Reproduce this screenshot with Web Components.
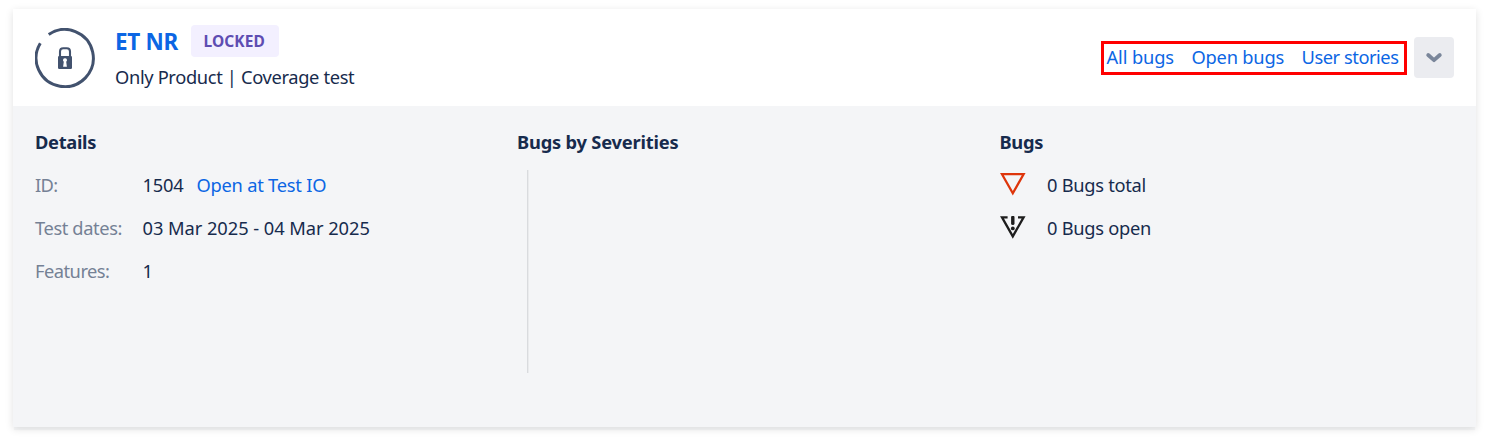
<!DOCTYPE html>
<html lang="en">
<head>
<meta charset="utf-8">
<title>ET NR</title>
<style>
html,body{margin:0;background:#fff}
body{height:438px;overflow:hidden;font-family:"Noto Sans","Open Sans",sans-serif;font-size:18.3px;line-height:24px;color:#172b4d}
</style>
</head>
<body>
<test-card></test-card>
<script>
function define(name, html, ready) {
  const t = document.createElement('template');
  t.innerHTML = html;
  customElements.define(name, class extends HTMLElement {
    connectedCallback() {
      if (this.shadowRoot) return;
      this.attachShadow({mode: 'open'}).append(t.content.cloneNode(true));
      if (ready) ready(this);
    }
  });
}

/* Text run whose tracking is adjusted to a given width. */
define('fit-text', `<style>
:host{display:inline-block;white-space:nowrap}
</style><slot></slot>`, el => {
  const w = parseFloat(el.getAttribute('w'));
  const natural = el.getBoundingClientRect().width;
  el.style.letterSpacing = ((w - natural) / el.textContent.length) + 'px';
  el.style.width = w + 'px';
});

define('status-ring', `<style>
:host{display:block;width:60px;height:60px}
svg{display:block}
</style>
<svg width="60" height="60" viewBox="0 0 60 60" fill="none" stroke="#42526e">
<path d="M13.7 6.4A28.6 28.6 0 1 1 5.3 15.2" stroke-width="3"/>
<path d="M25 29V23.5Q25 20.2 28.2 20.2H31.8Q35 20.2 35 23.5V29" stroke-width="2.1"/>
<rect x="23" y="28" width="14" height="13" rx="1.2" fill="#42526e" stroke="none"/>
<path d="M30 30.2a2 2 0 0 1 1.2 3.6l.7 5h-3.8l.7-5A2 2 0 0 1 30 30.2z" fill="#fff" stroke="none"/>
</svg>`);

define('status-badge', `<style>
:host{display:flex;box-sizing:border-box;width:88px;height:32px;padding-left:12.5px;align-items:center;border-radius:4px;background:#f3f0ff;color:#5e4db2;font-size:15.5px;font-weight:700;line-height:22px}
</style><slot></slot>`);

define('text-link', `<style>
:host{display:inline-block}
a{color:#0c66e4;text-decoration:none}
</style><a><slot></slot></a>`);

define('link-group', `<style>
:host{display:flex;box-sizing:border-box;width:306px;height:34px;border:3px solid #f00;padding:1px 0 0 2.5px;gap:17.5px}
</style><slot></slot>`);

define('toggle-button', `<style>
:host{display:flex;width:40px;height:41px;border-radius:4px;background:#ebecf0;align-items:center;justify-content:center}
</style>
<svg width="18" height="12" viewBox="0 0 18 12" fill="none" stroke="#7a869a" stroke-width="3.8" stroke-linecap="round" stroke-linejoin="round"><path d="M3.2 3 9 8.2 14.8 3"/></svg>`);

define('card-header', `<style>
:host{display:flex;box-sizing:border-box;height:97px;padding:0 22px;background:#fff}
status-ring{margin-top:19px}
.titles{margin:16px 0 0 20px;flex:1}
.top{display:flex;height:32px}
.name{font-size:22.5px;line-height:30px;font-weight:700;margin:2px 13px 0 0}
.sub{margin-top:8px}
link-group{margin-top:32px}
toggle-button{margin:28px 0 0 7px}
</style>
<status-ring></status-ring>
<div class="titles">
<div class="top"><text-link class="name"><fit-text w="63">ET NR</fit-text></text-link>
<status-badge><fit-text w="61.5">LOCKED</fit-text></status-badge></div>
<div class="sub"><fit-text w="239.3">Only Product | Coverage test</fit-text></div>
</div>
<link-group>
<text-link><fit-text w="67.5">All bugs</fit-text></text-link>
<text-link><fit-text w="92.5">Open bugs</fit-text></text-link>
<text-link><fit-text w="97">User stories</fit-text></text-link>
</link-group>
<toggle-button></toggle-button>`);

define('detail-column', `<style>
:host{display:block}
.h{font-weight:700;height:24px;margin-bottom:19px}
</style><div class="h"><slot name="heading"></slot></div><slot></slot>`);

define('detail-row', `<style>
:host{display:flex;height:24px;margin-bottom:19px}
.label{width:107.5px;color:#758195}
.value{display:flex;gap:13px}
</style><div class="label"><slot name="label"></slot></div><div class="value"><slot></slot></div>`);

define('severity-axis', `<style>
:host{display:block;box-sizing:border-box;width:2px;height:203px;margin:-3px 0 0 10px;border-left:1px solid #d9dbde;border-right:1px solid #eaebed}
</style>`);

define('bug-count', `<style>
:host{display:flex;height:24px;margin-bottom:19px;gap:21.5px}
svg{display:block}
</style><svg width="26" height="24" viewBox="0 0 26 24" fill="none" stroke-width="2.3"></svg><slot></slot>`, el => {
  el.shadowRoot.querySelector('svg').innerHTML = el.getAttribute('kind') === 'open'
    ? '<path d="M7.6 1.3H2L12.8 20.4 23.6 1.3H18" stroke="#1d1d1d"/><path d="M12.8 1.4V7.4" stroke="#1d1d1d" stroke-width="3.4" stroke-linecap="round"/><circle cx="12.8" cy="12.4" r="1.9" fill="#1d1d1d" stroke="none"/>'
    : '<path d="M2 1.2H23.6L12.8 20.2z" stroke="#de350b"/>';
});

define('card-body', `<style>
:host{display:grid;box-sizing:border-box;grid-template-columns:482px 482.5px 1fr;height:321px;padding:24px 22px 0;background:#f4f5f7}
</style>
<detail-column>
<fit-text slot="heading" w="61">Details</fit-text>
<detail-row><fit-text slot="label" w="22.5">ID:</fit-text><fit-text w="41">1504</fit-text><text-link><fit-text w="129.7">Open at Test IO</fit-text></text-link></detail-row>
<detail-row><fit-text slot="label" w="87">Test dates:</fit-text><fit-text w="227.3">03 Mar 2025 - 04 Mar 2025</fit-text></detail-row>
<detail-row><fit-text slot="label" w="74.5">Features:</fit-text><fit-text w="10">1</fit-text></detail-row>
</detail-column>
<detail-column>
<fit-text slot="heading" w="161.5">Bugs by Severities</fit-text>
<severity-axis></severity-axis>
</detail-column>
<detail-column>
<fit-text slot="heading" w="43.5">Bugs</fit-text>
<bug-count kind="total"><fit-text w="99">0 Bugs total</fit-text></bug-count>
<bug-count kind="open"><fit-text w="104">0 Bugs open</fit-text></bug-count>
</detail-column>`);

define('test-card', `<style>
:host{display:block;padding:9px 14px 0 13px}
article{box-shadow:0 4px 1px -1px rgba(9,30,66,.03),0 2px 8px rgba(0,0,0,.12)}
</style><article><card-header></card-header><card-body></card-body></article>`);
</script>
</body>
</html>
